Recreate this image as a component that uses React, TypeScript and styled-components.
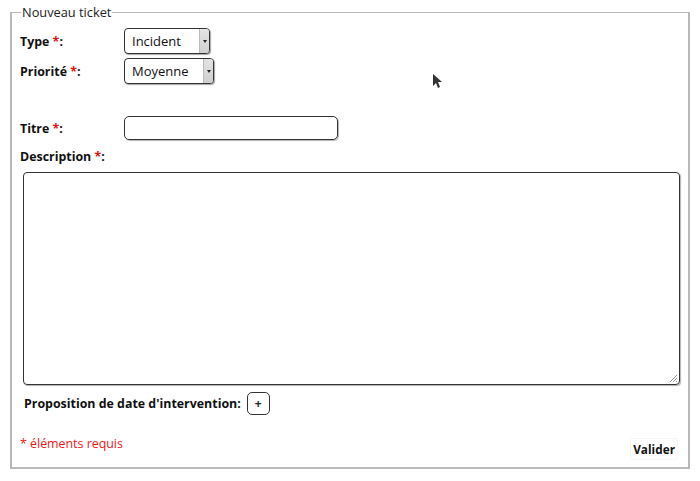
import React from "react";
import styled, { createGlobalStyle } from "styled-components";

const Global = createGlobalStyle`
  html, body { margin: 0; padding: 0; background: #fff; }
  body { font-family: "Open Sans", "DejaVu Sans", sans-serif; font-size: 13px; color: #111; }
  * { box-sizing: border-box; }
`;

const Page = styled.div`
  position: relative;
  width: 700px;
  height: 481px;
  padding: 5px 12px 0 10px;
`;

const Fieldset = styled.fieldset`
  margin: 0;
  height: 464px;
  border: 2px solid #b8b8b8;
  border-width: 1px 2px 2px 2px;
  padding: 0 8px 0 8px;
  display: flex;
  flex-direction: column;
`;

const Legend = styled.legend`
  padding: 0 1px;
  margin-left: 1px;
  font-size: 12.8px;
  color: #222;
  line-height: 14px;
`;

const Row = styled.div<{ $mt?: number }>`
  display: grid;
  grid-template-columns: 104px auto;
  align-items: center;
  margin-top: ${(p) => p.$mt ?? 0}px;
`;

const Label = styled.label`
  font-weight: 700;
  font-size: 12.4px;
  color: #111;
`;

const Star = styled.span`
  color: #e01010;
`;

const SelectBox = styled.div<{ $w: number }>`
  width: ${(p) => p.$w}px;
  height: 26px;
  border: 1px solid #333;
  border-radius: 4px;
  display: flex;
  align-items: stretch;
  overflow: hidden;
  box-shadow: 1px 1px 1px rgba(0,0,0,0.35);
  background: #fff;
`;

const SelectText = styled.span`
  flex: 1;
  display: flex;
  align-items: center;
  padding-left: 7px;
  font-size: 13px;
  color: #111;
`;

const SelectArrow = styled.span`
  width: 10px;
  background: linear-gradient(#e4e4e4, #cfcfcf);
  border-left: 1px solid #bbb;
  display: flex;
  align-items: center;
  justify-content: center;
  &::after {
    content: "";
    border-left: 2px solid transparent;
    border-right: 2px solid transparent;
    border-top: 3px solid #222;
  }
`;

const TextInput = styled.div`
  width: 214px;
  height: 24px;
  border: 1px solid #333;
  border-radius: 5px;
  box-shadow: 1px 1px 1px rgba(0,0,0,0.3);
`;

const TextArea = styled.div`
  position: relative;
  margin: 7px 0 0 3px;
  width: 657px;
  height: 213px;
  border: 1px solid #333;
  border-radius: 4px;
  box-shadow: 1px 1px 1px rgba(0,0,0,0.3);
`;

const Grip = styled.svg`
  position: absolute;
  right: 1px;
  bottom: 1px;
`;

const PropRow = styled.div`
  display: flex;
  align-items: center;
  gap: 6px;
  margin: 7px 0 0 4px;
`;

const PlusButton = styled.button`
  width: 23px;
  height: 23px;
  border: 1px solid #333;
  border-radius: 5px;
  background: #fff;
  padding: 0;
  font-family: inherit;
  font-size: 12px;
  font-weight: 700;
  color: #222;
  display: flex;
  align-items: center;
  justify-content: center;
`;

const Footer = styled.div`
  display: flex;
  justify-content: space-between;
  align-items: flex-start;
  margin-top: 20px;
`;

const Required = styled.span`
  color: #f01818;
  font-size: 12.4px;
`;

const Submit = styled.button`
  margin-top: 3px;
  margin-right: 2px;
  border: 1px solid #f6f6f6;
  border-radius: 3px;
  background: #fff;
  padding: 2px 2px;
  font-family: inherit;
  font-size: 11.8px;
  font-weight: 700;
  color: #111;
`;

const Cursor = styled.svg`
  position: absolute;
  left: 432px;
  top: 73px;
`;

export default function App() {
  return (
    <>
      <Global />
      <Page>
        <Fieldset>
          <Legend>Nouveau ticket</Legend>
          <Row $mt={9}>
            <Label>Type <Star>*</Star>:</Label>
            <SelectBox $w={86}>
              <SelectText>Incident</SelectText>
              <SelectArrow />
            </SelectBox>
          </Row>
          <Row $mt={4}>
            <Label>Priorité <Star>*</Star>:</Label>
            <SelectBox $w={90}>
              <SelectText>Moyenne</SelectText>
              <SelectArrow />
            </SelectBox>
          </Row>
          <Row $mt={32}>
            <Label>Titre <Star>*</Star>:</Label>
            <TextInput />
          </Row>
          <Row $mt={8}>
            <Label>Description <Star>*</Star>:</Label>
          </Row>
          <TextArea>
            <Grip width="10" height="10" viewBox="0 0 10 10">
              <path d="M9 2 L2 9 M9 5 L5 9 M9 8 L8 9" stroke="#999" strokeWidth="1" />
            </Grip>
          </TextArea>
          <PropRow>
            <Label>Proposition de date d'intervention:</Label>
            <PlusButton>+</PlusButton>
          </PropRow>
          <Footer>
            <Required>* éléments requis</Required>
            <Submit>Valider</Submit>
          </Footer>
        </Fieldset>
        <Cursor width="10" height="16" viewBox="0 0 10 16">
          <path d="M1 1 L1 13 L4 10 L6 15 L8 14 L6 9 L10 9 Z" fill="#333" />
        </Cursor>
      </Page>
    </>
  );
}
